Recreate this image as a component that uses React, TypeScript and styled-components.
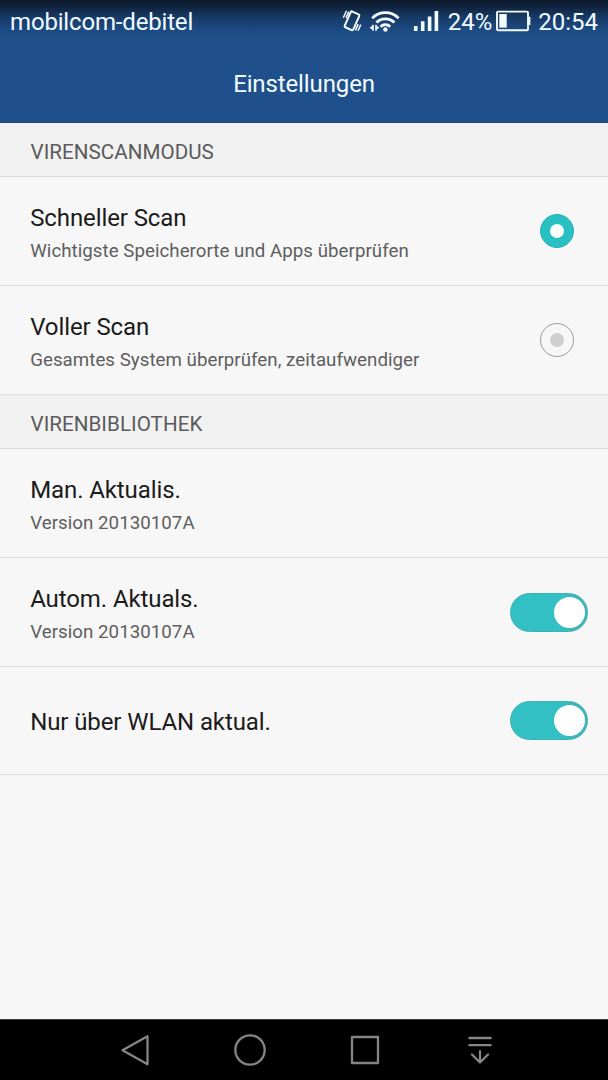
import React from "react";
import styled, { createGlobalStyle } from "styled-components";

const GlobalStyle = createGlobalStyle`
  * { box-sizing: border-box; }
  body { margin: 0; background: #f7f7f7; font-family: Roboto, "Liberation Sans", sans-serif; }
`;

const Screen = styled.div`
  width: 608px;
  height: 1080px;
  display: flex;
  flex-direction: column;
  background: #f7f7f7;
  overflow: hidden;
`;

const Header = styled.header`
  height: 123px;
  flex: none;
  color: #f1fbff;
  background: linear-gradient(#0d1a2b 0, #0f2038 5px, #173a66 17px, #1d4a82 30px, #20508b 42px);
  border-bottom: 1px solid #1c4580;
`;

const StatusBar = styled.div`
  height: 44px;
  display: flex;
  align-items: center;
  padding: 0 10px;
`;

const StatusText = styled.span<{ $spacing?: number; $left?: number }>`
  font-size: 24px;
  line-height: 44px;
  white-space: nowrap;
  letter-spacing: ${(p) => p.$spacing ?? 0}px;
  margin-left: ${(p) => p.$left ?? 0}px;
`;

const StatusIcons = styled.svg`
  display: block;
  flex: none;
  margin-left: auto;
`;

const Battery = styled.svg`
  display: block;
  flex: none;
  margin-left: 3px;
`;

const Title = styled.h1`
  margin: 0;
  height: 79px;
  line-height: 80px;
  text-align: center;
  font-size: 24px;
  font-weight: 400;
  letter-spacing: -0.12px;
`;

const SectionTitle = styled.h2`
  margin: 0;
  flex: none;
  height: 54px;
  padding-left: 30.5px;
  line-height: 58px;
  font-size: 20.6px;
  font-weight: 400;
  letter-spacing: 0.04px;
  color: #5a5a5a;
  background: #f1f1f1;
  border-bottom: 1px solid #dcdcdc;
`;

const Row = styled.div<{ $height: number; $end: number }>`
  height: ${(p) => p.$height}px;
  flex: none;
  display: flex;
  align-items: center;
  justify-content: space-between;
  padding: 0 ${(p) => p.$end}px 0 30.2px;
  border-bottom: 1px solid #dedede;
`;

const Texts = styled.div<{ $top?: number }>`
  padding-top: ${(p) => p.$top ?? 7}px;
`;

const Label = styled.div`
  font-size: 24px;
  line-height: 34px;
  color: #1b1b1b;
  white-space: nowrap;
  letter-spacing: -0.1px;
`;

const Detail = styled.div`
  font-size: 18.7px;
  line-height: 33px;
  color: #5e5e5e;
  white-space: nowrap;
  letter-spacing: 0.04px;
`;

const RadioRing = styled.span<{ $on: boolean }>`
  width: 34px;
  height: 34px;
  border-radius: 50%;
  display: grid;
  place-items: center;
  background: ${(p) => (p.$on ? "#28c0c3" : "transparent")};
  border: 1px solid ${(p) => (p.$on ? "#2cb3b6" : "#9c9c9c")};
`;

const RadioDot = styled.span<{ $on: boolean }>`
  width: 14px;
  height: 14px;
  border-radius: 50%;
  background: ${(p) => (p.$on ? "#ffffff" : "#cfcfcf")};
`;

const Track = styled.span`
  width: 78px;
  height: 39px;
  border-radius: 20px;
  display: flex;
  align-items: center;
  justify-content: flex-end;
  padding-right: 2px;
  background: linear-gradient(90deg, #32c0c4 70%, #40b5b8 78%);
  border: 1px solid #3fb1b4;
`;

const Thumb = styled.span`
  width: 31px;
  height: 31px;
  border-radius: 50%;
  background: #fff;
`;

const NavBar = styled.nav`
  height: 61px;
  flex: none;
  margin-top: auto;
  background: #000;
  border-top: 1px solid #3a3a3a;
  display: flex;
  justify-content: center;
  align-items: center;
  gap: 75px;
  padding-left: 6px;
`;

const NavIcon = styled.svg`
  width: 40px;
  height: 40px;
  display: block;
  fill: none;
  stroke: #858585;
  stroke-width: 2.3;
  stroke-linecap: round;
  stroke-linejoin: round;
`;

const Radio = ({ on }: { on: boolean }) => (
  <RadioRing $on={on}>
    <RadioDot $on={on} />
  </RadioRing>
);

const Toggle = () => (
  <Track>
    <Thumb />
  </Track>
);

export default function App() {
  return (
    <Screen>
      <GlobalStyle />
      <Header>
        <StatusBar>
          <StatusText $spacing={-0.17}>mobilcom-debitel</StatusText>
          <StatusIcons width="100" height="44" viewBox="340 0 100 44" fill="none" stroke="#f4fbff">
            <rect x="-4.7" y="-8.6" width="9.4" height="17.2" rx="1.3" transform="translate(352 20.8) rotate(24)" strokeWidth="2" />
            <path d="M343.3 17.8l3.2-7M346 17.9l2.8-6.3M355.4 30.4l2.8-6.3M358 30.8l2.8-6.2" strokeWidth="1.5" />
            <path d="M372.2 18.2a18.5 18.5 0 0 1 26.4 0M376.4 22.6a12.6 12.6 0 0 1 18 0M380.6 26.7a6.7 6.7 0 0 1 9.6 0" strokeWidth="2.8" />
            <circle cx="385.4" cy="29.5" r="2.2" fill="#f4fbff" stroke="none" />
            <path d="M373.8 24.8v6h-1.6v-1.2l-2.8-1.8 2.8-1.8v-1.2zM375.2 24.8v6h1.6v-1.2l2.8-1.8-2.8-1.8v-1.2z" fill="#f4fbff" stroke="none" />
            <path d="M415.7 26v5M422.7 21.3v9.7M429.6 16.4v14.6M436.4 11v20" strokeWidth="3.6" />
          </StatusIcons>
          <StatusText $left={8}>24%</StatusText>
          <Battery width="36" height="44" viewBox="495 0 36 44">
            <rect x="497" y="11.6" width="31" height="18.6" rx="1" fill="none" stroke="#f4fbff" strokeWidth="1.9" />
            <rect x="499.3" y="14" width="7.4" height="13.6" fill="#f4fbff" />
            <rect x="528" y="16.8" width="2.4" height="8.2" fill="#f4fbff" />
          </Battery>
          <StatusText $left={7}>20:54</StatusText>
        </StatusBar>
        <Title>Einstellungen</Title>
      </Header>

      <SectionTitle>VIRENSCANMODUS</SectionTitle>
      <Row $height={109} $end={34}>
        <Texts>
          <Label>Schneller Scan</Label>
          <Detail>Wichtigste Speicherorte und Apps überprüfen</Detail>
        </Texts>
        <Radio on />
      </Row>
      <Row $height={109} $end={34}>
        <Texts>
          <Label>Voller Scan</Label>
          <Detail>Gesamtes System überprüfen, zeitaufwendiger</Detail>
        </Texts>
        <Radio on={false} />
      </Row>

      <SectionTitle>VIRENBIBLIOTHEK</SectionTitle>
      <Row $height={109} $end={20}>
        <Texts>
          <Label>Man. Aktualis.</Label>
          <Detail>Version 20130107A</Detail>
        </Texts>
      </Row>
      <Row $height={109} $end={20}>
        <Texts>
          <Label>Autom. Aktuals.</Label>
          <Detail>Version 20130107A</Detail>
        </Texts>
        <Toggle />
      </Row>
      <Row $height={108} $end={20}>
        <Texts $top={3}>
          <Label>Nur über WLAN aktual.</Label>
        </Texts>
        <Toggle />
      </Row>

      <NavBar>
        <NavIcon viewBox="0 0 40 40">
          <path d="M7.5 20.3L32.5 6.3v28z" />
        </NavIcon>
        <NavIcon viewBox="0 0 40 40">
          <circle cx="20" cy="20" r="14.7" />
        </NavIcon>
        <NavIcon viewBox="0 0 40 40">
          <rect x="7" y="7" width="26" height="26" />
        </NavIcon>
        <NavIcon viewBox="0 0 40 40">
          <path d="M9.3 8h21.4M9.3 15.2h21.4M20 21.2v11.3M12 24.5l8 8 8-8" />
        </NavIcon>
      </NavBar>
    </Screen>
  );
}
